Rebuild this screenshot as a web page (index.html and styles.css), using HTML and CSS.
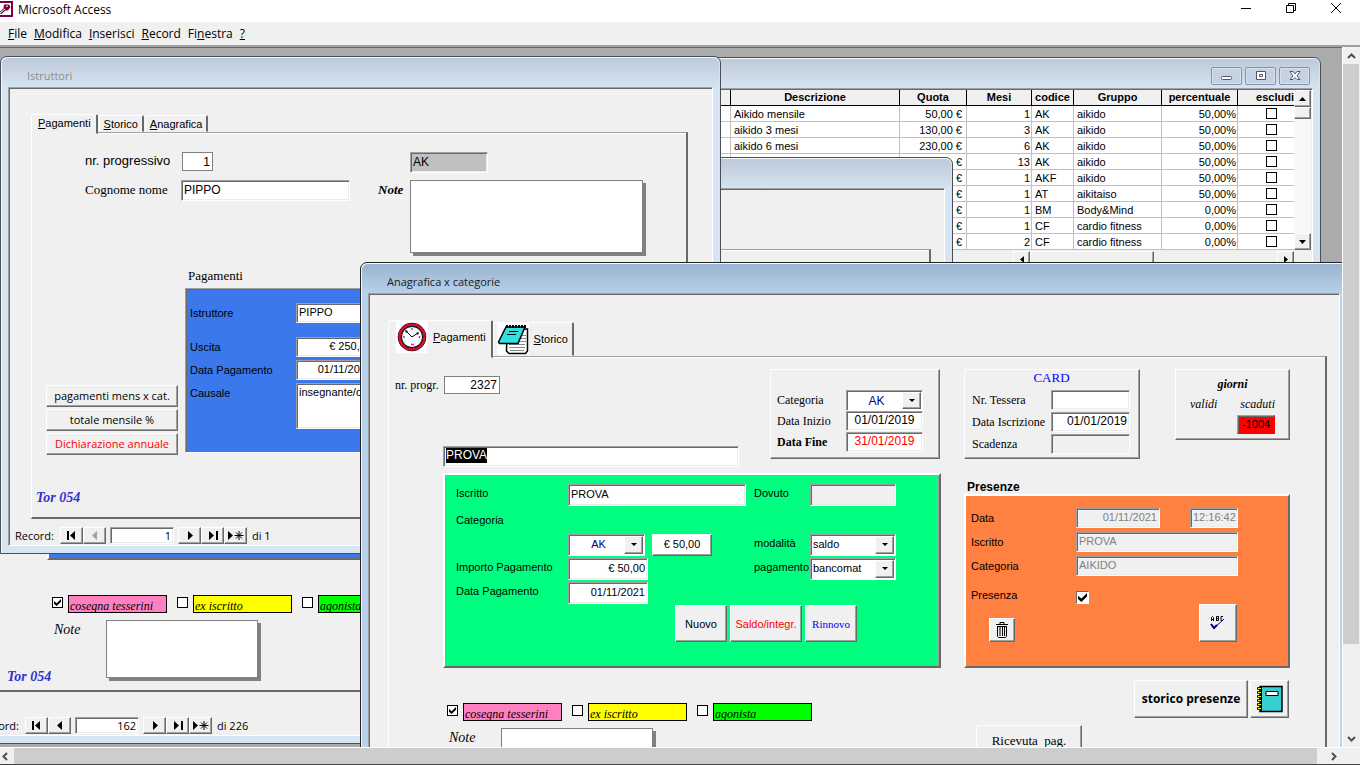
FILE: index.html
```html
<!DOCTYPE html>
<html lang="it">
<head>
<meta charset="utf-8">
<title>Microsoft Access</title>
<link rel="stylesheet" href="styles.css">
</head>
<body>
<svg class="defs" width="0" height="0" aria-hidden="true">
  <symbol id="first" viewBox="0 0 12 9"><path d="M1 0h2v9H1zM9 0v9L4 4.500z"/></symbol>
  <symbol id="prev" viewBox="0 0 12 9"><path d="M8 0v9L3 4.500z"/></symbol>
  <symbol id="next" viewBox="0 0 12 9"><path d="M4 0v9l5-4.500z"/></symbol>
  <symbol id="last" viewBox="0 0 12 9"><path d="M2 0v9l5-4.500zM9 0h2v9H9z"/></symbol>
  <symbol id="new" viewBox="0 0 18 9"><path d="M1 0v9l5-4.500z"/><path d="M12 0v9M7.500 4.500h9M9 1.500l6 6M15 1.500l-6 6" stroke="#000" fill="none"/></symbol>
</svg>

<header class="titlebar">
  <svg class="app-icon" width="14" height="16" viewBox="0 0 14 16"><path d="M0 1h12v14H0" fill="#fff" stroke="#7b0046" stroke-width="2"/><path d="M4 3.500h5l1.500 2.500L8 9.500H5.500L1.500 13 0 12.500v-2L3.500 7.500z" fill="#7b0046"/><path d="M6 5.500l2-.5M0 12l5-4" stroke="#fff" fill="none"/></svg>
  <h1>Microsoft Access</h1>
  <div class="app-controls">
    <button aria-label="Riduci a icona"><svg width="12" height="12"><path d="M1 6.500h10" stroke="#000"/></svg></button>
    <button aria-label="Ripristina"><svg width="12" height="12" fill="none" stroke="#000"><path d="M1.500 3.500h7v7h-7zM3.500 3.500v-2h7v7h-2"/></svg></button>
    <button aria-label="Chiudi"><svg width="12" height="12" fill="none" stroke="#000"><path d="M1 1l10 10M11 1L1 11"/></svg></button>
  </div>
</header>
<nav class="menubar">
  <a href="#"><u>F</u>ile</a><a href="#"><u>M</u>odifica</a><a href="#"><u>I</u>nserisci</a><a href="#"><u>R</u>ecord</a><a href="#">Fi<u>n</u>estra</a><a href="#"><u>?</u></a>
</nav>

<main class="workspace">
  <div class="desktop">

    <section class="window win-list">
      <header class="win-head">
        <div class="win-controls">
          <button aria-label="Riduci"><svg width="14" height="10"><rect x="1.500" y="5.500" width="10" height="3" rx="1" fill="#fff" stroke="#556"/></svg></button>
          <button aria-label="Ingrandisci"><svg width="14" height="10"><path d="M2.500.5h9v8h-9zM5.500 3.500h3v2h-3z" fill="#fff" stroke="#556"/></svg></button>
          <button aria-label="Chiudi"><svg width="14" height="10"><path d="M2 .5h3l2 2.500 2-2.500h3L9 5l3 3.500H9L7 6.500 5 8.500H2L5 5z" fill="#fff" stroke="#556"/></svg></button>
        </div>
      </header>
      <div class="client list-client">
        <div class="list-top">
          <table class="list">
            <colgroup><col class="c0"><col class="c1"><col class="c2"><col class="c3"><col class="c4"><col class="c5"><col class="c6"><col class="c7"></colgroup>
            <thead><tr><th></th><th>Descrizione</th><th>Quota</th><th>Mesi</th><th>codice</th><th>Gruppo</th><th>percentuale</th><th class="cut">escludi</th></tr></thead>
            <tbody>
              <tr><td></td><td>Aikido mensile</td><td class="num euro">50,00 €</td><td class="num">1</td><td>AK</td><td>aikido</td><td class="num">50,00%</td><td class="mid"><input type="checkbox" aria-label="escludi"></td></tr>
              <tr><td></td><td>aikido 3 mesi</td><td class="num euro">130,00 €</td><td class="num">3</td><td>AK</td><td>aikido</td><td class="num">50,00%</td><td class="mid"><input type="checkbox" aria-label="escludi"></td></tr>
              <tr><td></td><td>aikido 6 mesi</td><td class="num euro">230,00 €</td><td class="num">6</td><td>AK</td><td>aikido</td><td class="num">50,00%</td><td class="mid"><input type="checkbox" aria-label="escludi"></td></tr>
              <tr><td></td><td></td><td class="num euro">€</td><td class="num">13</td><td>AK</td><td>aikido</td><td class="num">50,00%</td><td class="mid"><input type="checkbox" aria-label="escludi"></td></tr>
              <tr><td></td><td></td><td class="num euro">€</td><td class="num">1</td><td>AKF</td><td>aikido</td><td class="num">50,00%</td><td class="mid"><input type="checkbox" aria-label="escludi"></td></tr>
              <tr><td></td><td></td><td class="num euro">€</td><td class="num">1</td><td>AT</td><td>aikitaiso</td><td class="num">50,00%</td><td class="mid"><input type="checkbox" aria-label="escludi"></td></tr>
              <tr><td></td><td></td><td class="num euro">€</td><td class="num">1</td><td>BM</td><td>Body&amp;Mind</td><td class="num">0,00%</td><td class="mid"><input type="checkbox" aria-label="escludi"></td></tr>
              <tr><td></td><td></td><td class="num euro">€</td><td class="num">1</td><td>CF</td><td>cardio fitness</td><td class="num">0,00%</td><td class="mid"><input type="checkbox" aria-label="escludi"></td></tr>
              <tr><td></td><td></td><td class="num euro">€</td><td class="num">2</td><td>CF</td><td>cardio fitness</td><td class="num">0,00%</td><td class="mid"><input type="checkbox" aria-label="escludi"></td></tr>
            </tbody>
          </table>
          <div class="old-scroll">
            <button aria-label="Su"><svg width="7" height="4"><path d="M0 4h7L3.500 0z"/></svg></button>
            <span class="old-thumb"></span>
            <button class="end" aria-label="Giù"><svg width="7" height="4"><path d="M0 0h7L3.500 4z"/></svg></button>
          </div>
        </div>
        <div class="old-hscroll">
          <button aria-label="Sinistra"><svg width="4" height="7"><path d="M4 0v7L0 3.500z"/></svg></button>
          <span class="old-thumb"></span>
          <button class="end" aria-label="Destra"><svg width="4" height="7"><path d="M0 0v7l4-3.500z"/></svg></button>
        </div>
      </div>
    </section>

    <section class="window win-back">
      <header class="win-head"></header>
      <div class="client form">
        <div class="page">
          <div class="blue-strip"></div>
          <div class="flags">
            <label><input type="checkbox" checked><span class="flag pink">cosegna tesserini</span></label>
            <label><input type="checkbox"><span class="flag yellow">ex iscritto</span></label>
            <label><input type="checkbox"><span class="flag green">agonista</span></label>
          </div>
          <div class="note-row"><label for="nota-back">Note</label><textarea id="nota-back" class="note"></textarea></div>
          <p class="brand">Tor 054</p>
        </div>
        <div class="recnav">
          <span>Record:</span>
          <div class="navset"><button aria-label="Primo"><svg width="12" height="9"><use href="#first"/></svg></button><button aria-label="Precedente"><svg width="12" height="9"><use href="#prev"/></svg></button></div>
          <input class="field num" aria-label="Record" value="162">
          <div class="navset"><button aria-label="Successivo"><svg width="12" height="9"><use href="#next"/></svg></button><button aria-label="Ultimo"><svg width="12" height="9"><use href="#last"/></svg></button><button aria-label="Nuovo record"><svg width="18" height="9"><use href="#new"/></svg></button></div>
          <span>di 226</span>
        </div>
      </div>
    </section>

    <section class="window win-istruttori">
      <header class="win-head"><h2>Istruttori</h2></header>
      <div class="client form">
        <div class="tabs" role="tablist">
          <button class="tab on" role="tab"><span><u>P</u>agamenti</span></button>
          <button class="tab" role="tab"><span><u>S</u>torico</span></button>
          <button class="tab" role="tab"><span><u>A</u>nagrafica</span></button>
        </div>
        <div class="page">
          <div class="ident">
            <label for="progressivo" class="arial">nr. progressivo</label>
            <input id="progressivo" class="flat num short" value="1">
            <span></span>
            <input class="field gray code" aria-label="Codice" value="AK" readonly>
            <label for="cognome" class="name">Cognome nome</label>
            <input id="cognome" class="field big" value="PIPPO">
            <label for="note-i" class="note-label">Note</label>
            <textarea id="note-i" class="note"></textarea>
          </div>
          <div class="lower">
            <div class="actions">
              <button class="btn">pagamenti mens x cat.</button>
              <button class="btn">totale mensile %</button>
              <button class="btn red">Dichiarazione annuale</button>
            </div>
            <div class="pay">
              <h3>Pagamenti</h3>
              <div class="blue">
                <label for="istr">Istruttore</label><input id="istr" class="field" value="PIPPO">
                <label for="uscita">Uscita</label><input id="uscita" class="field num" value="€ 250,00">
                <label for="datap">Data Pagamento</label><input id="datap" class="field num" value="01/11/2021">
                <label for="causale">Causale</label><textarea id="causale" class="field">insegnante/co</textarea>
              </div>
            </div>
          </div>
          <p class="brand">Tor 054</p>
        </div>
        <div class="recnav">
          <span>Record:</span>
          <div class="navset"><button aria-label="Primo"><svg width="12" height="9"><use href="#first"/></svg></button><button aria-label="Precedente"><svg width="12" height="9" fill="#a0a0a0"><use href="#prev"/></svg></button></div>
          <input class="field num" aria-label="Record" value="1">
          <div class="navset"><button aria-label="Successivo"><svg width="12" height="9"><use href="#next"/></svg></button><button aria-label="Ultimo"><svg width="12" height="9"><use href="#last"/></svg></button><button aria-label="Nuovo record"><svg width="18" height="9"><use href="#new"/></svg></button></div>
          <span>di 1</span>
        </div>
      </div>
    </section>

    <section class="window active win-main">
      <header class="win-head"><h2>Anagrafica x categorie</h2></header>
      <div class="client form">
        <div class="tabs tall" role="tablist">
          <button class="tab on" role="tab">
            <svg width="32" height="32" viewBox="0 0 32 32"><path d="M0 0h32v32H0z" fill="#fff"/><circle cx="16" cy="16" r="12.500" fill="#fff" stroke="#000" stroke-width="3.500"/><circle cx="16" cy="16" r="12.500" fill="none" stroke="#d8102c" stroke-width="2.500"/><circle cx="16" cy="16" r="10.500" fill="none" stroke="#000"/><path d="M10 10l6 6 6-4" fill="none" stroke="#000"/><path d="M9 9l3 1-2 2zM20 12l3-1-1 3z"/><path d="M15 8h2M8 15v2" stroke="#00c"/><path d="M15 23.500h3M23.500 15v2" stroke="#f0f" stroke-width="1.500"/></svg>
            <span><u>P</u>agamenti</span>
          </button>
          <button class="tab" role="tab">
            <svg width="32" height="32" viewBox="0 0 32 32"><path d="M0 0h32v32H0z" fill="#fff"/><path d="M10 6h20.500v22l-2 2.500H12L9.500 28z" fill="#fff" stroke="#000" stroke-width="1.500"/><path d="M24 12.500h5M22 15.500h7M21 18.500h8M12 21.500h16M12 24.500h16M13 27.500h14" stroke="#888"/><path d="M9 4h19l-7 16.500H2.500L1.500 19z" fill="#35dede" stroke="#000" stroke-width="1.500"/><path d="M9 3.500h20" stroke="#000" stroke-width="3" stroke-dasharray="2 1"/><path d="M12 8.500h9M10 11.500h9" stroke="#000"/></svg>
            <span><u>S</u>torico</span>
          </button>
        </div>
        <div class="page">
          <div class="row-top">
            <div class="person">
              <div class="progr"><label for="progr">nr. progr.</label><input id="progr" class="flat num" value="2327"></div>
              <div class="field name-box"><span class="sel">PROVA</span></div>
            </div>
            <div class="group fields">
              <label for="cat">Categoria</label>
              <span class="combo mid navy"><select id="cat"><option>AK</option></select></span>
              <label for="inizio">Data Inizio</label><input id="inizio" class="field big mid" value="01/01/2019">
              <label for="fine" class="strong">Data Fine</label><input id="fine" class="field big mid red" value="31/01/2019">
            </div>
            <div class="group card">
              <h3>CARD</h3>
              <div class="card-fields">
                <label for="tessera">Nr. Tessera</label><input id="tessera" class="field big" value="">
                <label for="iscr">Data Iscrizione</label><input id="iscr" class="field big num" value="01/01/2019">
                <label for="scad">Scadenza</label><input id="scad" class="field off" value="" readonly>
              </div>
            </div>
            <div class="group days">
              <h3>giorni</h3>
              <div class="days-cols"><span>validi</span><label for="scaduti">scaduti</label></div>
              <input id="scaduti" class="field alert" value="-1004" readonly>
            </div>
          </div>

          <div class="row-mid">
            <div class="panel-green">
              <div class="green-grid">
                <label for="iscritto">Iscritto</label><input id="iscritto" class="field wide" value="PROVA">
                <label for="dovuto">Dovuto</label><input id="dovuto" class="field off" value="" readonly>
                <label for="cat2" class="full">Categoria</label>
                <span></span>
                <div class="pair"><span class="combo mid navy"><select id="cat2"><option>AK</option></select></span><button class="btn white">€ 50,00</button></div>
                <label for="modo">modalità</label><span class="combo"><select id="modo"><option>saldo</option></select></span>
                <label for="importo">Importo Pagamento</label><input id="importo" class="field money num" value="€ 50,00">
                <label for="pagam">pagamento</label><span class="combo"><select id="pagam"><option>bancomat</option></select></span>
                <label for="data">Data Pagamento</label><input id="data" class="field money num" value="01/11/2021">
              </div>
              <div class="green-actions">
                <button class="btn">Nuovo</button>
                <button class="btn red">Saldo/integr.</button>
                <button class="btn blue-text">Rinnovo</button>
              </div>
            </div>
            <div class="presenze">
              <h3>Presenze</h3>
              <div class="panel-orange">
                <div class="orange-grid">
                  <label for="pdata">Data</label>
                  <div class="when"><input id="pdata" class="field off num" value="01/11/2021" readonly><input class="field off time" aria-label="Ora" value="12:16:42" readonly></div>
                  <label for="pisc">Iscritto</label><input id="pisc" class="field off" value="PROVA" readonly>
                  <label for="pcat">Categoria</label><input id="pcat" class="field off" value="AIKIDO" readonly>
                </div>
                <div class="presenza"><label for="pres">Presenza</label><input id="pres" type="checkbox" class="sunk" checked></div>
                <div class="orange-actions">
                  <button class="btn trash" aria-label="Elimina"><svg width="12" height="16" fill="none" stroke="#000"><path d="M4 2V.5h4V2M0 2.500h12M1.500 4v10.500l1 1h7l1-1V4M4 5v9M6.500 5v9M8.500 5v9"/><path d="M1 4.500h10"/></svg></button>
                  <button class="btn spell" aria-label="Controllo"><svg width="16" height="16"><path d="M1.500 6V2.500l1-1 1 1V6M1.500 4.500h2M6.500 6V1.500h2v2h-2M8.500 3.500V5.500h-2M13 1.500h-2v4h2" fill="none" stroke="#000"/><path d="M1 9l3 4L14 4" fill="none" stroke="#000080"/><path d="M1 9l3 4 3-3" fill="none" stroke="#000080" stroke-width="2"/></svg></button>
                </div>
              </div>
            </div>
          </div>

          <div class="row-end">
            <div class="extra">
              <div class="flags">
                <label><input type="checkbox" checked><span class="flag pink">cosegna tesserini</span></label>
                <label><input type="checkbox"><span class="flag yellow">ex iscritto</span></label>
                <label><input type="checkbox"><span class="flag green">agonista</span></label>
              </div>
              <div class="note-row"><label for="nota-main">Note</label><textarea id="nota-main" class="note"></textarea></div>
            </div>
            <div class="links">
              <div class="links-top">
                <button class="btn history">storico presenze</button>
                <button class="btn book" aria-label="Registro"><svg width="26" height="28" viewBox="0 0 26 28"><path d="M3 1.500h22v25H3z" fill="#35cfd0" stroke="#000" stroke-width="1.500"/><path d="M4 1v26" stroke="#000" stroke-width="2"/><path d="M0 3.500h5M0 7.500h5M0 11.500h5M0 15.500h5M0 19.500h5M0 23.500h5" stroke="#000" stroke-width="2.500"/><path d="M1 3.500h3M1 7.500h3M1 11.500h3M1 15.500h3M1 19.500h3M1 23.500h3" stroke="#ee0"/><path d="M9 6.500h12v4H9z" fill="#fff" stroke="#000"/></svg></button>
              </div>
              <button class="btn receipt">Ricevuta&nbsp; pag.</button>
            </div>
          </div>
        </div>
      </div>
    </section>
  </div>

  <div class="vscroll">
    <button aria-label="Scorri su"><svg width="9" height="6" fill="none" stroke="#505050" stroke-width="2"><path d="M1 5l3.500-3.500L8 5"/></svg></button>
    <span class="thumb"></span>
    <button aria-label="Scorri giù"><svg width="9" height="6" fill="none" stroke="#505050" stroke-width="2"><path d="M1 1l3.500 3.500L8 1"/></svg></button>
  </div>
  <div class="hscroll">
    <button class="to-left" aria-label="Scorri a sinistra"><svg width="6" height="9" fill="none" stroke="#505050" stroke-width="2"><path d="M5 1L1.500 4.500 5 8"/></svg></button>
    <span class="thumb"></span>
    <button class="to-right" aria-label="Scorri a destra"><svg width="6" height="9" fill="none" stroke="#505050" stroke-width="2"><path d="M1 1l3.500 3.500L1 8"/></svg></button>
  </div>
</main>
</body>
</html>
```
FILE: styles.css
```css
:root {
  --face: #f0f0f0;
  --mid: #a0a0a0;
  --dark: #696969;
  --ui: "Open Sans", "Noto Sans", sans-serif;
  --sans: "Liberation Sans", Arial, sans-serif;
  --serif: "Liberation Serif", "Times New Roman", serif;
}
* { box-sizing: border-box; margin: 0; padding: 0; }
body {
  display: flex;
  flex-direction: column;
  height: 100vh;
  overflow: hidden;
  background: var(--face);
  font: 11px/14px var(--sans);
  color: #000;
}
.defs { position: absolute; }
button, input, select, textarea { font: inherit; color: inherit; border: 0; border-radius: 0; background: none; }
button { display: flex; align-items: center; justify-content: center; white-space: nowrap; }
textarea { resize: none; overflow: hidden; }
h1, h2, h3 { font: inherit; }
svg { flex: none; display: block; }
.num { text-align: right; }

/* application frame */
.titlebar { display: flex; align-items: center; gap: 4px; height: 22px; flex: none; background: #fff; font: 12px/18px var(--ui); }
.app-icon { margin-bottom: 4px; }
.titlebar h1 { margin-bottom: 2px; }
.app-controls { margin-left: auto; display: flex; padding: 0 18px 6px 0; gap: 33px; }
.menubar { display: flex; gap: 7px; align-items: center; height: 25px; flex: none; padding: 1px 8px 0; border-bottom: 2px solid var(--mid); font: 12px/16px var(--ui); }
.menubar a { color: #000; text-decoration: none; }
.workspace { flex: 1; min-height: 0; display: grid; grid-template: minmax(0, 1fr) 17px / minmax(0, 1fr) 18px; border-bottom: 1px solid #444; }
.desktop { position: relative; overflow: hidden; background: #ababab; border-top: 1px solid var(--dark); }
.vscroll { display: flex; flex-direction: column; border-left: 1px solid #fff; padding-right: 1px; }
.vscroll button { height: 17px; flex: none; }
.vscroll .thumb { height: 580px; margin-bottom: auto; background: #cdcdcd; }
.hscroll { grid-column: 1 / -1; display: flex; border-top: 1px solid #fff; padding-right: 9px; }
.hscroll .to-left { width: 14px; flex: none; padding-right: 4px; }
.hscroll .thumb { flex: 1; background: #cdcdcd; }
.hscroll .to-right { width: 34px; flex: none; }

/* child windows */
.window { position: absolute; display: flex; flex-direction: column; border: 1px solid #4a4f55; border-radius: 7px 7px 0 0; background: #d7e4f2; box-shadow: inset 1px 1px 0 #f4f8fc; }
.win-head { height: 30px; flex: none; margin: 1px 1px -1px; border-radius: 6px 6px 0 0; background: linear-gradient(#bccad9, #d7e4f2); display: flex; align-items: center; padding: 6px 8px 0 25px; color: #8c8c8c; font: 11px/16px var(--ui); }
.window.active { background: #b9d1ea; border-color: #222; }
.active .win-head { background: linear-gradient(#99b4d1, #b9d1ea); color: #1a1a1a; }
.client { flex: 1; min-height: 0; display: flex; flex-direction: column; margin: 0 7px; background: var(--face); border: 1px solid; border-color: var(--mid) #fff #fff var(--mid); box-shadow: inset 1px 1px 0 var(--dark); padding: 1px; margin-bottom: 7px; }
.win-list { left: 500px; top: 9px; width: 821px; }
.win-back { left: -35px; top: 109px; width: 988px; height: 587px; }
.win-istruttori { left: 0; top: 8px; width: 721px; height: 498px; }
.win-main { left: 360px; top: 214px; width: 988px; }

/* price list */
.win-controls { display: flex; gap: 3px; margin-left: auto; }
.win-list .win-head { padding: 4px 9px 0 25px; }
.win-controls button { width: 31px; height: 18px; border: 1px solid #8592ad; border-radius: 2px; background: #c4d2e2; box-shadow: inset 0 0 0 1px #d7e2ee; }
.list-top { display: flex; }
.list { table-layout: fixed; border-collapse: separate; border-spacing: 0; flex: 1; width: 0; background: #fff; }
.c0 { width: auto; } .c1 { width: 169px; } .c2 { width: 67px; } .c3 { width: 65px; } .c4 { width: 42px; } .c5 { width: 88px; } .c6 { width: 76px; } .c7 { width: 56px; }
.list th { height: 16px; line-height: 15px; font-weight: bold; background: var(--face); border-right: 1px solid #000; border-bottom: 1px solid #000; }
.list td { height: 16px; line-height: 14px; padding: 1px 1px 0 3px; border-right: 1px solid #c0c0c0; border-bottom: 1px solid #c0c0c0; white-space: nowrap; }
.list td:last-child, .list th:last-child { border-right: 0; }
.list .cut { text-align: right; }
.list .euro { padding-right: 4px; }
.mid { text-align: center; }
.list .mid input { display: block; margin: 0 auto 2px 25px; }
.old-scroll { width: 17px; display: flex; flex-direction: column; background: #f7f7f7; }
.old-scroll button, .old-hscroll button, .old-thumb { width: 17px; height: 17px; flex: none; background: var(--face); border: 1px solid; border-color: #fff var(--dark) var(--dark) #fff; box-shadow: inset -1px -1px 0 var(--mid); }
.old-scroll .old-thumb { height: 12px; }
.old-scroll .end { margin-top: auto; }
.old-hscroll { display: flex; padding: 1px 17px 0 503px; }
.old-hscroll .old-thumb { width: 124px; }
.old-hscroll .end { margin-left: auto; }

/* tabs and pages */
.tabs { display: flex; align-items: flex-end; gap: 1px; margin-left: 21px; padding-top: 24px; height: 43px; flex: none; }
.tab { height: 17px; padding: 0 4px; border: 1px solid; border-color: #fff var(--dark) transparent #fff; border-right-width: 2px; border-radius: 2px 2px 0 0; background: var(--face); }
.tab.on { height: 20px; margin-bottom: -2px; padding: 0 5px 2px 6px; z-index: 1; }
.tabs.tall { height: 61px; margin-left: 18px; gap: 0; }
.tall .tab { height: 34px; padding: 0 4px 0 3px; gap: 5px; }
.tall .tab.on { height: 38px; padding: 0 5px 4px 7px; gap: 5px; }
.page { margin: 0 23px 0 21px; border: 1px solid; border-color: var(--mid) var(--dark) var(--dark) #fff; border-width: 1px 2px 2px 1px; box-shadow: inset 0 1px 0 #fff; }
.win-main .page { margin: 0 11px 30px 18px; }

/* fields */
.field { width: 100%; min-width: 0; height: 20px; padding: 0 2px 2px; background: #fff; border: 1px solid; border-color: var(--mid) #fff #fff var(--mid); box-shadow: inset 1px 1px 0 var(--dark), inset -1px -1px 0 #ececec; }
.field.big { font-size: 12px; }
.field.gray { background: #c0c0c0; }
.field.off { background: var(--face); color: #808080; }
.field.alert { background: #f00; box-shadow: inset 1px 1px 0 var(--dark); border-color: var(--mid) #f00 #f00 var(--mid); }
.flat { background: #fff; border: 1px solid #808080; height: 19px; padding: 0 2px; font-size: 12px; }
.red { color: #f00; }
.navy { color: #000080; }
.combo { position: relative; display: block; height: 21px; background: #fff; border: 1px solid; border-color: var(--mid) #fff #fff var(--mid); box-shadow: inset 1px 1px 0 var(--dark); }
.combo select { appearance: none; display: block; width: 100%; height: 100%; padding: 0 18px 2px 2px; }
.combo.mid select { text-align-last: center; }
.combo::before { content: ""; position: absolute; right: 1px; top: 1px; bottom: 1px; width: 17px; background: var(--face); border: 1px solid; border-color: #fff var(--dark) var(--dark) #fff; box-shadow: inset -1px -1px 0 var(--mid); pointer-events: none; }
.combo::after { content: ""; position: absolute; right: 7px; top: 8px; border: 3px solid transparent; border-top-color: #000; border-bottom: 0; pointer-events: none; }
.btn { background: var(--face); border: 1px solid; border-color: #fff var(--dark) var(--dark) #fff; box-shadow: inset -1px -1px 0 var(--mid); }
.btn.white { background: #fff; padding-bottom: 2px; }
input[type="checkbox"] { appearance: none; display: block; flex: none; width: 11px; height: 11px; border: 1px solid #000; background: #fff; }
input[type="checkbox"]:checked::before { content: ""; display: block; width: 7px; height: 7px; margin: 1px; background: #000; clip-path: polygon(0 30%, 38% 62%, 100% 0, 100% 38%, 38% 100%, 0 68%); }
input[type="checkbox"].sunk { width: 13px; height: 13px; border-color: var(--dark) #fff #fff var(--dark); }
input[type="checkbox"].sunk:checked::before { width: 9px; height: 9px; }
.note { background: #fff; border: 1px solid #808080; box-shadow: 3px 3px 0 #808080; }

/* flags and notes */
.flags { display: flex; gap: 10px; font: italic 12px/18px var(--serif); }
.flags label { display: flex; gap: 5px; }
.flags input { margin-top: 2px; }
.flag { width: 99px; height: 18px; padding: 1px; border: 1px solid #000; }
.pink { background: #ff80c0; } .yellow { background: #ff0; } .green { background: #0f0; }
.note-row { display: flex; padding: 7px 0 0 2px; font: italic 14px/18px var(--serif); }
.note-row label { width: 52px; padding-top: 1px; }
.note-row .note { width: 152px; height: 58px; }
.brand { font: italic bold 14px/18px var(--serif); color: #33c; }

/* record navigation */
.recnav { display: flex; align-items: center; gap: 4px; height: 17px; flex: none; padding-left: 5px; margin-top: 8px; font: 11px/16px var(--ui); }
.recnav > span:first-child { width: 41px; }
.recnav > span:last-child { margin-left: 1px; }
.recnav .field { width: 64px; height: 17px; padding-bottom: 0; }
.navset { display: flex; }
.navset button { width: 23px; height: 17px; border: 1px solid; border-color: #fff var(--dark) var(--dark) #fff; box-shadow: inset -1px -1px 0 var(--mid); }

/* member form behind */
.win-back .page { margin: 59px 12px 0 18px; flex: 1; display: flex; flex-direction: column; justify-content: flex-end; padding: 0 0 4px 58px; }
.blue-strip { height: 200px; flex: none; width: 700px; margin: 0 0 35px -5px; background: #3b78ec; border: 2px solid; border-color: var(--dark) #fff var(--dark) #fff; }
.win-back .brand { margin: -10px 0 0 -45px; }
.win-back .recnav { margin-top: 25px; }

/* instructors form */
.win-istruttori .page { flex: 1; display: flex; flex-direction: column; padding-top: 19px; }
.ident { display: grid; grid-template-columns: 96px 197px 32px 234px; grid-template-rows: 21px 73px; row-gap: 7px; padding-left: 53px; }
.arial { font: 13px/18px var(--sans); white-space: nowrap; }
.name { font: 13px/20px var(--serif); }
.short { width: 31px; margin-left: 1px; }
.code { width: 78px; height: 21px; font-size: 12px; }
.ident #cognome { width: 169px; height: 21px; }
.note-label { font: italic bold 13px/19px var(--serif); }
.ident .note { width: 233px; }
.lower { display: flex; gap: 7px; padding: 15px 0 0 14px; }
.actions { width: 132px; display: flex; flex-direction: column; gap: 2px; padding-top: 117px; font: 11px/16px var(--ui); }
.actions .btn { height: 22px; }
.pay h3 { font: 13px/16px var(--serif); padding: 0 3px; margin-bottom: 4px; }
.blue { display: grid; grid-template-columns: 106px 160px; grid-template-rows: 31px 20px 20px 46px; row-gap: 3px; width: 460px; height: 165px; padding: 14px 0 0 4px; background: #3b78ec; border: 1px solid; border-color: var(--mid) #fff #fff var(--mid); box-shadow: inset 1px 1px 0 var(--dark); line-height: 20px; }
.blue #uscita, .blue #datap { width: 79px; }
.blue textarea { height: 46px; line-height: 16px; }
.win-istruttori .brand { margin: auto 0 10px 4px; }

/* member form */
.row-top { display: flex; align-items: flex-start; padding-top: 12px; }
.person { width: 381px; flex: none; padding: 7px 0 0 6px; }
.progr { display: flex; align-items: center; font: 12px/18px var(--serif); }
.progr label { width: 49px; white-space: nowrap; }
.progr .flat { width: 56px; height: 18px; font-family: var(--sans); }
.name-box { width: 296px; height: 21px; margin: 52px 0 0 48px; padding: 1px 2px; font-size: 12px; line-height: 15px; }
.sel { display: inline-block; background: #000; color: #fff; }
.group { border: 1px solid; border-color: #fff var(--dark) var(--dark) #fff; box-shadow: inset -1px -1px 0 var(--mid); font: 12px/20px var(--serif); }
.group input, .group select { font-family: var(--sans); }
.fields { width: 170px; height: 90px; display: grid; grid-template-columns: 69px 77px; grid-auto-rows: 20px; row-gap: 1px; padding: 20px 0 0 6px; }
.strong { font-weight: bold; }
.card { width: 176px; height: 90px; margin-left: 24px; padding: 0 0 0 7px; }
.card h3 { color: #00f; font-size: 13px; line-height: 16px; text-align: center; padding: 0 8px 4px 0; }
.card-fields { display: grid; grid-template-columns: 79px 79px; grid-auto-rows: 20px; row-gap: 2px; }
.days { width: 115px; margin-left: 35px; padding: 6px 14px; height: 71px; font-style: italic; }
.days h3 { font-weight: bold; line-height: 17px; text-align: center; }
.days-cols { display: flex; justify-content: space-between; line-height: 22px; }
.days .field { display: block; width: 38px; height: 19px; margin-left: auto; padding: 0 2px 1px 4px; font-style: normal; font-size: 11px; }
.row-mid { display: flex; gap: 23px; padding: 6px 0 0 54px; }
.panel-green { width: 498px; height: 195px; padding: 9px 11px; background: #00ff80; border: 2px solid; border-color: #fff var(--dark) var(--dark) #fff; box-shadow: inset 1px 1px 0 var(--mid), inset -1px -1px 0 var(--mid); }
.green-grid { display: grid; grid-template-columns: 112px 186px 56px 86px; grid-template-rows: 22px 24px 22px 22px 22px; row-gap: 2px; line-height: 18px; }
.green-grid .field, .green-grid .combo { height: 22px; }
.green-grid .wide { width: 178px; }
.green-grid .full { grid-column: 1 / -1; line-height: 24px; }
.pair { display: flex; gap: 7px; }
.pair .combo { width: 77px; }
.pair .btn { width: 60px; height: 22px; }
.green-grid .money { width: 80px; }
.green-actions { display: flex; gap: 3px; padding: 1px 0 0 219px; }
.green-actions .btn { height: 37px; width: 52px; }
.green-actions .red { width: 72px; }
.blue-text { color: #00f; font-family: var(--serif); }
.presenze { width: 326px; padding-top: 7px; }
.presenze h3 { font-weight: bold; font-size: 12px; padding-left: 3px; }
.panel-orange { height: 174px; padding: 12px 50px 0 5px; background: #ff8040; border: 2px solid; border-color: #fff var(--dark) var(--dark) #fff; box-shadow: inset -1px -1px 0 var(--mid); }
.orange-grid { display: grid; grid-template-columns: 105px 1fr; grid-auto-rows: 20px; row-gap: 4px; line-height: 20px; }
.when { display: flex; justify-content: space-between; }
.when .num { width: 84px; }
.when .time { width: 48px; padding-right: 0; }
.presenza { display: flex; align-items: flex-end; height: 28px; }
.presenza label { width: 105px; line-height: 18px; }
.orange-actions { display: flex; justify-content: space-between; align-items: flex-end; padding: 0 1px 0 18px; }
.trash { width: 26px; height: 24px; }
.spell { width: 38px; height: 38px; }
.row-end { display: flex; padding: 12px 0 0 58px; height: 100px; }
.extra { width: 517px; padding-top: 23px; }
.links-top { display: flex; gap: 2px; margin-left: 170px; }
.history { width: 114px; height: 38px; font: bold 12px/16px var(--ui); }
.book { width: 39px; height: 38px; }
.receipt { width: 106px; height: 38px; margin: 7px 0 0 12px; padding-bottom: 6px; font: 13px/18px var(--serif); }
```
